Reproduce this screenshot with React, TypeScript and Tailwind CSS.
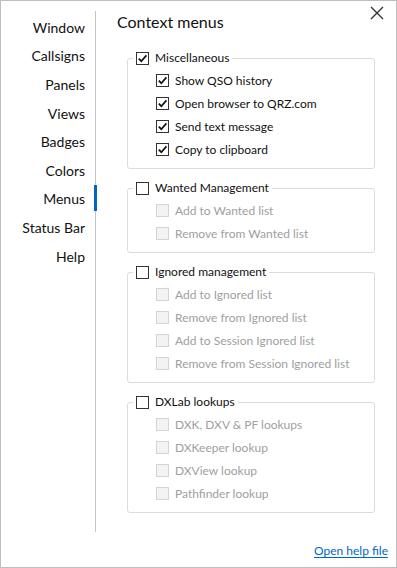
import React, { useState } from "react";

interface Group {
  title: string;
  checked: boolean;
  items: { label: string; checked: boolean }[];
}

const navItems = ["Window", "Callsigns", "Panels", "Views", "Badges", "Colors", "Menus", "Status Bar", "Help"];

const initialGroups: Group[] = [
  {
    title: "Miscellaneous",
    checked: true,
    items: [
      { label: "Show QSO history", checked: true },
      { label: "Open browser to QRZ.com", checked: true },
      { label: "Send text message", checked: true },
      { label: "Copy to clipboard", checked: true },
    ],
  },
  {
    title: "Wanted Management",
    checked: false,
    items: [
      { label: "Add to Wanted list", checked: false },
      { label: "Remove from Wanted list", checked: false },
    ],
  },
  {
    title: "Ignored management",
    checked: false,
    items: [
      { label: "Add to Ignored list", checked: false },
      { label: "Remove from Ignored list", checked: false },
      { label: "Add to Session Ignored list", checked: false },
      { label: "Remove from Session Ignored list", checked: false },
    ],
  },
  {
    title: "DXLab lookups",
    checked: false,
    items: [
      { label: "DXK, DXV & PF lookups", checked: false },
      { label: "DXKeeper lookup", checked: false },
      { label: "DXView lookup", checked: false },
      { label: "Pathfinder lookup", checked: false },
    ],
  },
];

const Check = ({ checked, disabled, onClick }: { checked: boolean; disabled?: boolean; onClick?: () => void }) => (
  <span
    onClick={disabled ? undefined : onClick}
    className={
      disabled
        ? "flex h-[13px] w-[13px] shrink-0 items-center justify-center border border-[#d4d4d4] bg-[#f3f3f3]"
        : "flex h-[13px] w-[13px] shrink-0 items-center justify-center border border-[#333333] bg-white"
    }
  >
    {checked && (
      <svg width="11" height="11" viewBox="0 0 11 11">
        <path d="M1.8 5.6 L4.3 8.2 L9.4 2.4" fill="none" stroke="#111" strokeWidth="1.7" />
      </svg>
    )}
  </span>
);

const App = () => {
  const [groups, setGroups] = useState<Group[]>(initialGroups);
  const selected = "Menus";

  const toggleGroup = (gi: number) => {
    setGroups(groups.map((g, i) => (i === gi ? { ...g, checked: !g.checked } : g)));
  };

  const toggleItem = (gi: number, ii: number) => {
    setGroups(
      groups.map((g, i) =>
        i === gi ? { ...g, items: g.items.map((it, j) => (j === ii ? { ...it, checked: !it.checked } : it)) } : g
      )
    );
  };

  return (
    <div
      className="relative flex h-[568px] w-[397px] flex-col border border-[#bdbdbd] bg-white text-[#111111]"
      style={{ fontFamily: 'Lato, "Open Sans", sans-serif' }}
    >
      <button className="absolute right-[12px] top-[5px] p-0">
        <svg width="14" height="14" viewBox="0 0 14 14">
          <path d="M1 1 L13 13 M13 1 L1 13" stroke="#333" strokeWidth="1.4" />
        </svg>
      </button>

      <div className="flex">
        <nav className="mt-[10px] flex h-[521px] w-[95px] shrink-0 flex-col border-r border-[#c4c4c4] pt-[2px]">
          {navItems.map((item) => (
            <div key={item} className="relative flex h-[28.6px] items-center justify-end whitespace-nowrap pr-[10px] text-[14px]">
              {item}
              {item === selected && <span className="absolute right-[-2px] top-0 h-[26px] w-[3px] bg-[#0067c0]" />}
            </div>
          ))}
        </nav>

        <div className="flex-1 pl-[21px] pr-[21px] pt-[10px]">
          <h1 className="mb-[15px] whitespace-nowrap text-[16px] leading-[22px]">Context menus</h1>
          <div className="ml-[10px] flex w-[248px] flex-col gap-[9px]">
            {groups.map((g, gi) => (
              <fieldset key={g.title} className="rounded-[3px] border border-[#d8dde2] pb-[7px]">
                <legend className="ml-[5px] flex h-[20px] items-center gap-[6px] whitespace-nowrap px-[3px] text-[12px]">
                  <Check checked={g.checked} onClick={() => toggleGroup(gi)} />
                  <span>{g.title}</span>
                </legend>
                <div className="pt-[1px]">
                  {g.items.map((it, ii) => (
                    <div key={it.label} className="flex h-[23px] items-center gap-[6px] whitespace-nowrap pl-[28px] text-[12px]">
                      <Check checked={it.checked} disabled={!g.checked} onClick={() => toggleItem(gi, ii)} />
                      <span className={g.checked ? "text-[#111111]" : "text-[#a0a0a0]"}>{it.label}</span>
                    </div>
                  ))}
                </div>
              </fieldset>
            ))}
          </div>
        </div>
      </div>

      <div className="flex flex-1 items-end justify-end pb-[7px] pr-[8px]">
        <a href="#" className="whitespace-nowrap text-[12px] leading-[18px] text-[#0066cc] underline underline-offset-2">
          Open help file
        </a>
      </div>
    </div>
  );
};

export default App;
